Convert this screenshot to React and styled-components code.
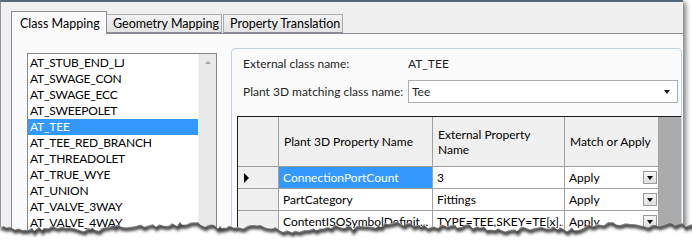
import React from "react"
import styled, { createGlobalStyle } from "styled-components"

const GlobalStyle = createGlobalStyle`
  html, body {
    margin: 0;
    padding: 0;
    background: #ffffff;
  }
  body {
    font-family: "Segoe UI", Lato, "Open Sans", sans-serif;
    font-size: 12px;
    color: #000;
  }
`

const classes = [
  "AT_STUB_END_LJ",
  "AT_SWAGE_CON",
  "AT_SWAGE_ECC",
  "AT_SWEEPOLET",
  "AT_TEE",
  "AT_TEE_RED_BRANCH",
  "AT_THREADOLET",
  "AT_TRUE_WYE",
  "AT_UNION",
  "AT_VALVE_3WAY",
  "AT_VALVE_4WAY",
]

const rows = [
  { name: "ConnectionPortCount", ext: "3", mode: "Apply", current: true },
  { name: "PartCategory", ext: "Fittings", mode: "Apply" },
  { name: "ContentISOSymbolDefinit...", ext: "TYPE=TEE,SKEY=TE[x]...", mode: "Apply" },
]

const Stage = styled.div`
  position: relative;
  width: 692px;
  height: 241px;
  overflow: hidden;
  background: #fff;
`

const Window = styled.div`
  width: 682px;
  height: 260px;
  border-top: 2px solid #56697a;
  border-left: 1px solid #8c959e;
  background: #f0f0f0;
  box-shadow: 3px 2px 5px rgba(0, 0, 0, 0.5);
  display: flex;
  flex-direction: column;
`

const TabStrip = styled.div`
  display: flex;
  align-items: flex-end;
  height: 31px;
  padding-left: 10px;
  position: relative;
  z-index: 1;
`

const Tab = styled.div`
  box-sizing: border-box;
  width: ${(p) => p.$w}px;
  height: ${(p) => (p.$active ? 23 : 19)}px;
  margin-bottom: ${(p) => (p.$active ? -1 : 0)}px;
  margin-left: ${(p) => (p.$gap ? 1 : 0)}px;
  border: 1px solid ${(p) => (p.$active ? "#898c95" : "#acacac")};
  border-bottom: ${(p) => (p.$active ? "none" : "1px solid #898c95")};
  border-left: ${(p) => (p.$first || p.$gap ? "" : "none")};
  background: ${(p) =>
    p.$active ? "#fbfbfb" : "linear-gradient(#f2f2f2, #e3e3e3)"};
  padding: ${(p) => (p.$active ? "3px 0 0 8px" : "0 0 0 6px")};
  font-size: 12.5px;
  line-height: 17px;
  white-space: nowrap;
  overflow: hidden;
  color: #000;
`

const Panel = styled.div`
  flex: 1;
  margin-left: 10px;
  border-top: 1px solid #898c95;
  border-left: 1px solid #898c95;
  background: #fbfbfb;
  display: flex;
  align-items: flex-start;
  gap: 14px;
  padding: 14px 1px 0 15px;
`

const ListBox = styled.div`
  margin-top: 5px;
  width: 188px;
  height: 200px;
  border: 1px solid #828790;
  background: #fff;
  display: flex;
`

const Items = styled.div`
  flex: 1;
  padding-top: 1px;
`

const Item = styled.div`
  height: 16px;
  line-height: 16px;
  padding-left: 2px;
  letter-spacing: -0.2px;
  background: ${(p) => (p.$selected ? "#3399ff" : "transparent")};
  color: ${(p) => (p.$selected ? "#fff" : "#000")};
  white-space: nowrap;
`

const ScrollBar = styled.div`
  width: 17px;
  background: #e9e9e9;
  border-left: 1px solid #f2f2f2;
  display: flex;
  justify-content: center;
  padding-top: 7px;
`

const UpArrow = styled.div`
  width: 0;
  height: 0;
  border-left: 3px solid transparent;
  border-right: 3px solid transparent;
  border-bottom: 3px solid #a4a4a4;
`

const GroupBox = styled.div`
  flex: 1;
  height: 210px;
  border: 1px solid #c0d3e6;
  border-radius: 4px;
  padding: 0 0 0 5px;
  display: flex;
  flex-direction: column;
`

const FieldRow = styled.div`
  display: grid;
  grid-template-columns: 165px 1fr;
  align-items: center;
  height: ${(p) => p.$h}px;
  margin-top: ${(p) => p.$mt || 0}px;
  padding-left: 6px;
  color: #1e1e1e;
  white-space: nowrap;
`

const Combo = styled.div`
  box-sizing: border-box;
  height: 23px;
  margin-right: 3px;
  border: 1px solid #abadb3;
  background: #fff;
  display: flex;
  align-items: center;
  justify-content: space-between;
  padding: 0 7px 0 3px;
`

const ComboArrow = styled.div`
  width: 0;
  height: 0;
  border-left: 3.5px solid transparent;
  border-right: 3.5px solid transparent;
  border-top: 4px solid #1a1a1a;
`

const Grid = styled.div`
  margin-top: 13px;
  border: 1px solid #1c1c1c;
  border-right: none;
  background: #ababab;
  flex: 1;
`

const GridRow = styled.div`
  display: grid;
  grid-template-columns: 41px 154px 132px 94px;
  height: ${(p) => p.$h}px;
`

const HeadCell = styled.div`
  box-sizing: border-box;
  background: #f0f0f0;
  border-right: 1px solid #a0a0a0;
  border-bottom: 1px solid #a0a0a0;
  display: flex;
  align-items: center;
  padding: 0 2px 0 5px;
  line-height: 15px;
`

const RowHead = styled.div`
  box-sizing: border-box;
  background: #f0f0f0;
  border-right: 1px solid #a0a0a0;
  border-bottom: 1px solid #a0a0a0;
  display: flex;
  align-items: center;
  padding-left: 6px;
`

const Pointer = styled.div`
  width: 0;
  height: 0;
  border-top: 5px solid transparent;
  border-bottom: 5px solid transparent;
  border-left: 5px solid #000;
`

const Cell = styled.div`
  box-sizing: border-box;
  background: ${(p) => (p.$selected ? "#3399ff" : "#fff")};
  color: ${(p) => (p.$selected ? "#fff" : "#000")};
  border-right: 1px solid #a0a0a0;
  border-bottom: 1px solid #a0a0a0;
  display: flex;
  align-items: center;
  justify-content: space-between;
  gap: 2px;
  padding: 0 1px 0 4px;
  white-space: nowrap;
  overflow: hidden;
`

const CellText = styled.span`
  overflow: hidden;
  text-overflow: clip;
`

const DropButton = styled.div`
  box-sizing: border-box;
  flex: none;
  width: 14px;
  height: 13px;
  border: 1px solid #9a9a9a;
  background: linear-gradient(#f6f6f6, #dedede);
  display: flex;
  align-items: center;
  justify-content: center;
`

const DropArrow = styled.div`
  width: 0;
  height: 0;
  border-left: 3.5px solid transparent;
  border-right: 3.5px solid transparent;
  border-top: 4px solid #000;
`

const Tear = styled.svg`
  position: absolute;
  left: 0;
  top: 212px;
`

// jagged torn-paper line across the bottom
const tearPoints = (() => {
  let seed = 7
  const rnd = () => {
    seed = (seed * 9301 + 49297) % 233280
    return seed / 233280
  }
  const pts = []
  let x = 0
  while (x <= 700) {
    const wave = Math.sin(x / 37) * 2.2 + Math.sin(x / 11) * 1.4
    pts.push([x, 15 + wave + (rnd() - 0.5) * 5])
    x += 2 + Math.floor(rnd() * 4)
  }
  return pts
})()

const TornEdge = () => {
  const line = tearPoints.map(([x, y]) => `${x},${y.toFixed(1)}`).join(" ")
  const shadow = tearPoints.map(([x, y]) => `${x + 1},${(y + 2).toFixed(1)}`).join(" ")
  return (
    <Tear width="692" height="29" viewBox="0 0 692 29">
      <defs>
        <clipPath id="below">
          <polygon points={`${line} 700,29 0,29`} />
        </clipPath>
        <filter id="soft" x="-5%" y="-100%" width="110%" height="300%">
          <feGaussianBlur stdDeviation="1.4" />
        </filter>
      </defs>
      <g clipPath="url(#below)">
        <rect x="0" y="0" width="692" height="29" fill="#fff" />
        <polyline points={shadow} fill="none" stroke="#3a3a3a" strokeWidth="4" filter="url(#soft)" />
      </g>
    </Tear>
  )
}

const App = () => (
  <Stage>
    <GlobalStyle />
    <Window>
      <TabStrip>
        <Tab $active $first $w={96}>Class Mapping</Tab>
        <Tab $w={115}>Geometry Mapping</Tab>
        <Tab $gap $w={120}>Property Translation</Tab>
      </TabStrip>
      <Panel>
        <ListBox>
          <Items>
            {classes.map((c) => (
              <Item key={c} $selected={c === "AT_TEE"}>{c}</Item>
            ))}
          </Items>
          <ScrollBar>
            <UpArrow />
          </ScrollBar>
        </ListBox>
        <GroupBox>
          <FieldRow $h={28}>
            <span>External class name:</span>
            <span>AT_TEE</span>
          </FieldRow>
          <FieldRow $h={23} $mt={3}>
            <span>Plant 3D matching class name:</span>
            <Combo>
              <span>Tee</span>
              <ComboArrow />
            </Combo>
          </FieldRow>
          <Grid>
            <GridRow $h={50}>
              <HeadCell />
              <HeadCell>Plant 3D Property Name</HeadCell>
              <HeadCell>External Property Name</HeadCell>
              <HeadCell>Match or Apply</HeadCell>
            </GridRow>
            {rows.map((r) => (
              <GridRow key={r.name} $h={22}>
                <RowHead>{r.current && <Pointer />}</RowHead>
                <Cell $selected={r.current}>
                  <CellText>{r.name}</CellText>
                </Cell>
                <Cell>
                  <CellText>{r.ext}</CellText>
                </Cell>
                <Cell>
                  <CellText>{r.mode}</CellText>
                  <DropButton>
                    <DropArrow />
                  </DropButton>
                </Cell>
              </GridRow>
            ))}
          </Grid>
        </GroupBox>
      </Panel>
    </Window>
    <TornEdge />
  </Stage>
)

export default App
